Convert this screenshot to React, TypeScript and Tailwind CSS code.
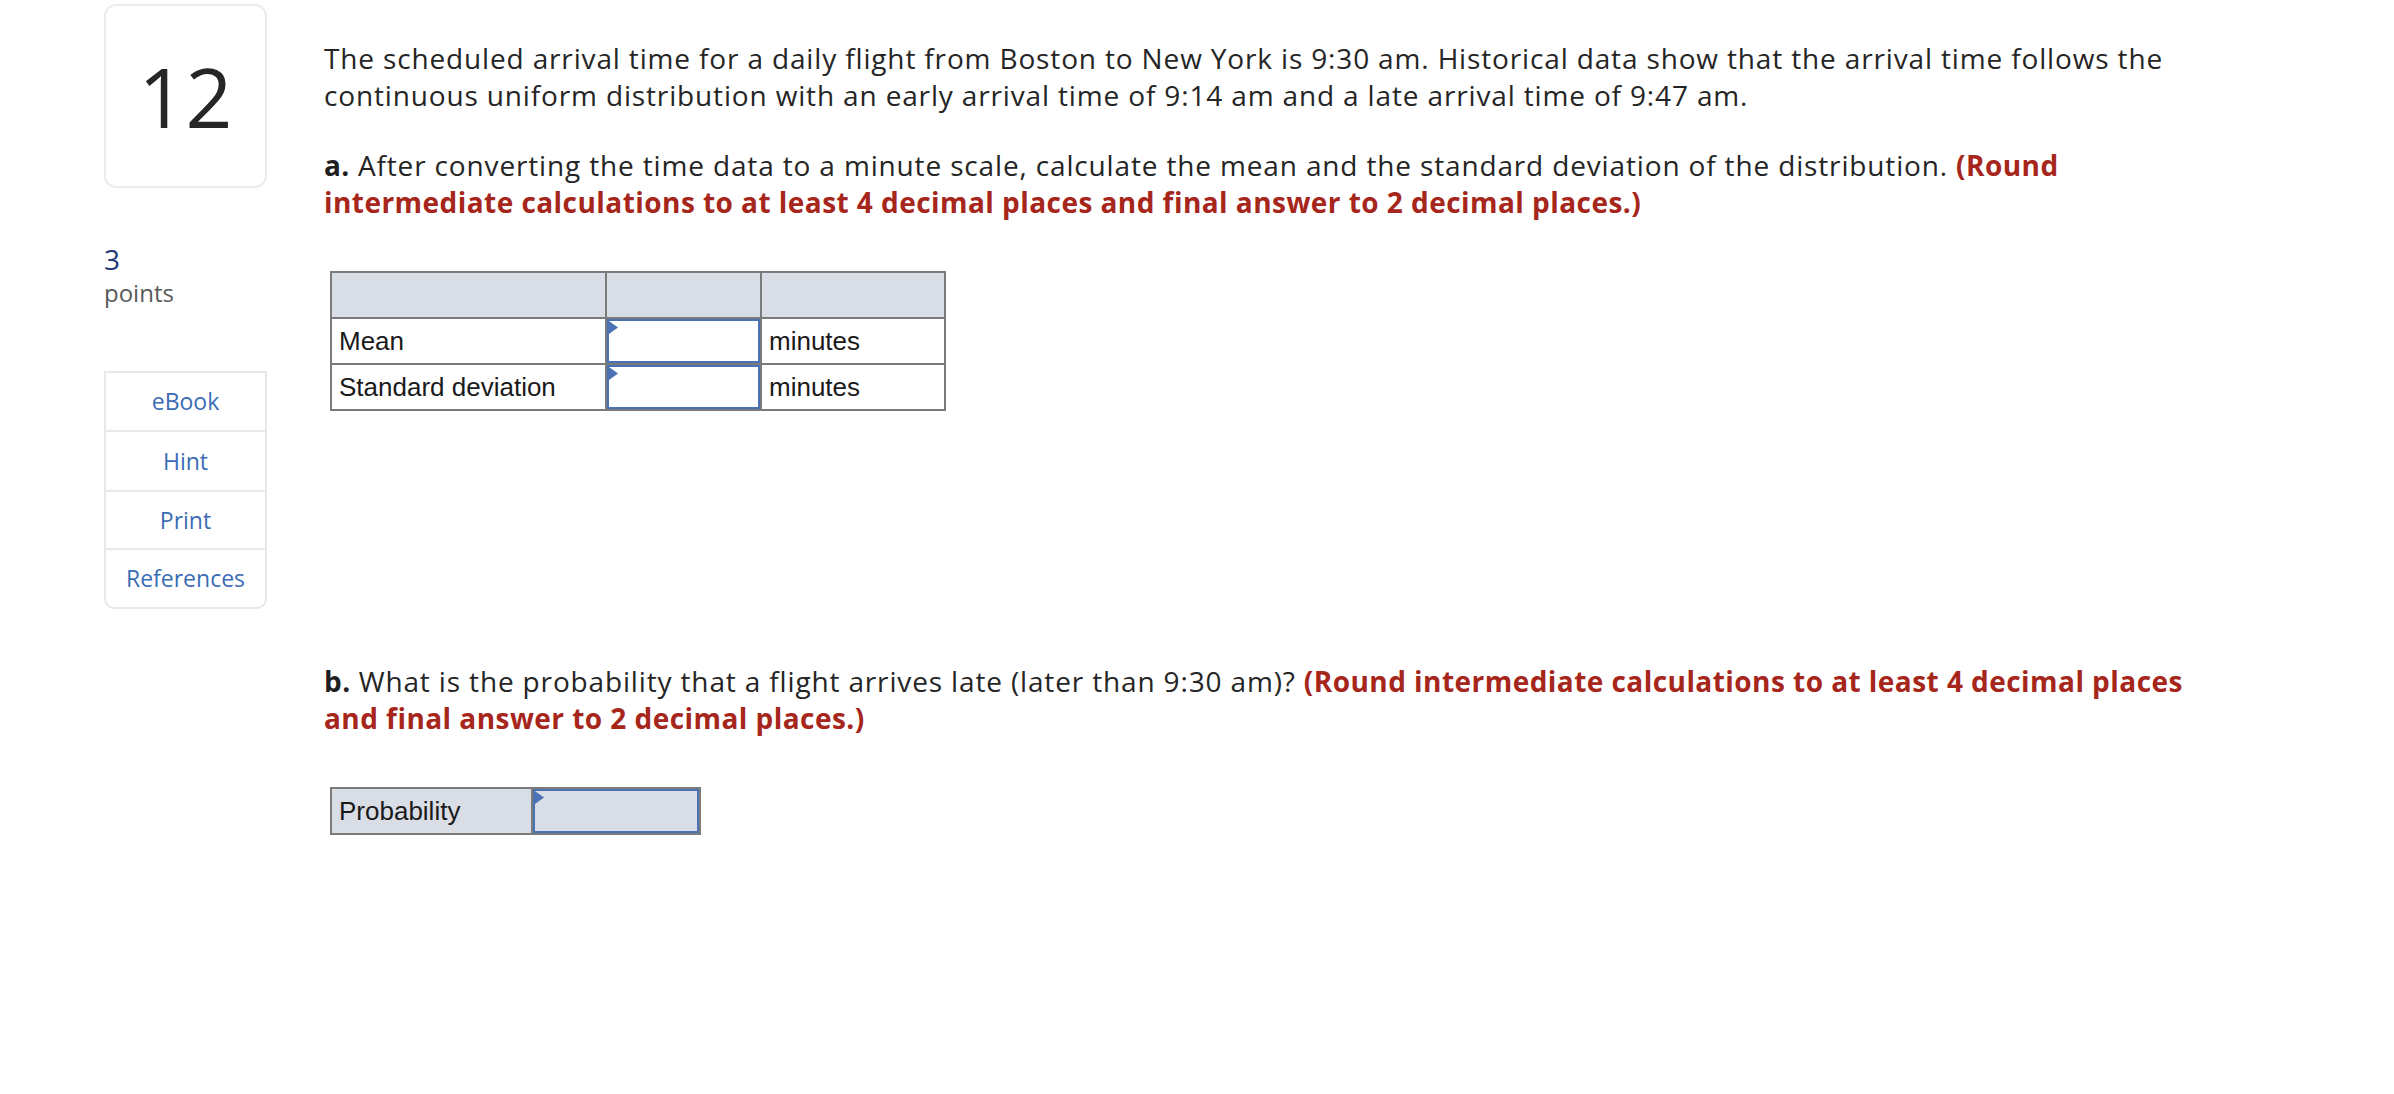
import React from 'react';

const sans = { fontFamily: '"Open Sans", Lato, sans-serif' };
const arial = { fontFamily: '"Liberation Sans", Arial, sans-serif' };

function Flag() {
  return (
    <svg className="absolute left-0 top-0" width="9" height="13" viewBox="0 0 9 13">
      <polygon points="0,0 9,6.5 0,13" fill="#4a72b4" />
    </svg>
  );
}

function AnswerCell({ grey }: { grey?: boolean }) {
  return (
    <td className="border-2 border-[#7b7b7b] p-0 h-[46px]">
      <div className={`relative h-[44px] border-2 border-[#4a72b4] ${grey ? 'bg-[#d9dde5]' : 'bg-white'}`}>
        <Flag />
      </div>
    </td>
  );
}

// bold red instruction text
function Note({ children }: { children: React.ReactNode }) {
  return <b className="font-bold text-[#a6261c] tracking-[0.45px]">{children}</b>;
}

const tools = [
  { label: 'eBook', h: 'h-[59px]' },
  { label: 'Hint', h: 'h-[60px]' },
  { label: 'Print', h: 'h-[58px]' },
  { label: 'References', h: 'h-[57px]' },
];

export default function App() {
  return (
    <div className="flex min-h-screen bg-white text-[#252525]" style={sans}>
      {/* left rail */}
      <aside className="ml-[104px] w-[163px] shrink-0 pt-[4px]">
        <div className="h-[184px] rounded-[12px] border-2 border-[#ececec] flex items-center justify-center text-[82px] text-[#262626] leading-none">
          12
        </div>
        <div className="mt-[57px] text-[28px] leading-none text-[#1e3a78]">3</div>
        <div className="mt-[8px] text-[24px] leading-none text-[#5a5a5a]">points</div>
        <div className="mt-[66px] border-2 border-[#e8e8e8] rounded-b-[10px] text-[23px] text-[#3c6cb4]">
          {tools.map((t, i) => (
            <div
              key={t.label}
              className={`${t.h} flex items-center justify-center ${i < 3 ? 'border-b-2 border-[#e8e8e8]' : ''}`}
            >
              {t.label}
            </div>
          ))}
        </div>
      </aside>

      {/* question */}
      <main className="ml-[57px] pt-[40px] whitespace-nowrap text-[28px] leading-[37px] tracking-[0.85px]">
        <p>
          The scheduled arrival time for a daily flight from Boston to New York is 9:30 am. Historical data show that the arrival time follows the
          <br />
          continuous uniform distribution with an early arrival time of 9:14 am and a late arrival time of 9:47 am.
        </p>
        <p className="mt-[33px]">
          <b className="font-bold text-[#1f1f1f] tracking-[0.45px]">a.</b> After converting the time data to a minute scale, calculate the mean and the standard deviation of the distribution.{' '}
          <Note>(Round</Note>
          <br />
          <Note>intermediate calculations to at least 4 decimal places and final answer to 2 decimal places.)</Note>
        </p>

        <table className="mt-[50px] ml-[6px] border-collapse text-[26px] text-[#1a1a1a] tracking-normal" style={arial}>
          <tbody>
            <tr className="bg-[#d9dde5]">
              <td className="border-2 border-[#7b7b7b] w-[275px] h-[46px]"></td>
              <td className="border-2 border-[#7b7b7b] w-[155px] h-[46px]"></td>
              <td className="border-2 border-[#7b7b7b] w-[184px] h-[46px]"></td>
            </tr>
            <tr>
              <td className="border-2 border-[#7b7b7b] px-[7px] h-[46px]">Mean</td>
              <AnswerCell />
              <td className="border-2 border-[#7b7b7b] px-[7px] h-[46px]">minutes</td>
            </tr>
            <tr>
              <td className="border-2 border-[#7b7b7b] px-[7px] h-[46px]">Standard deviation</td>
              <AnswerCell />
              <td className="border-2 border-[#7b7b7b] px-[7px] h-[46px]">minutes</td>
            </tr>
          </tbody>
        </table>

        <p className="mt-[252px]">
          <b className="font-bold text-[#1f1f1f] tracking-[0.45px]">b.</b> What is the probability that a flight arrives late (later than 9:30 am)?{' '}
          <Note>(Round intermediate calculations to at least 4 decimal places</Note>
          <br />
          <Note>and final answer to 2 decimal places.)</Note>
        </p>

        <table className="mt-[50px] ml-[6px] border-collapse text-[26px] text-[#1a1a1a] tracking-normal" style={arial}>
          <tbody>
            <tr className="bg-[#d9dde5]">
              <td className="border-2 border-[#7b7b7b] px-[7px] w-[201px] h-[46px]">Probability</td>
              <td className="w-[168px] p-0 border-2 border-[#7b7b7b]">
                <div className="relative h-[44px] border-2 border-[#4a72b4] bg-[#d9dde5]">
                  <Flag />
                </div>
              </td>
            </tr>
          </tbody>
        </table>
      </main>
    </div>
  );
}
